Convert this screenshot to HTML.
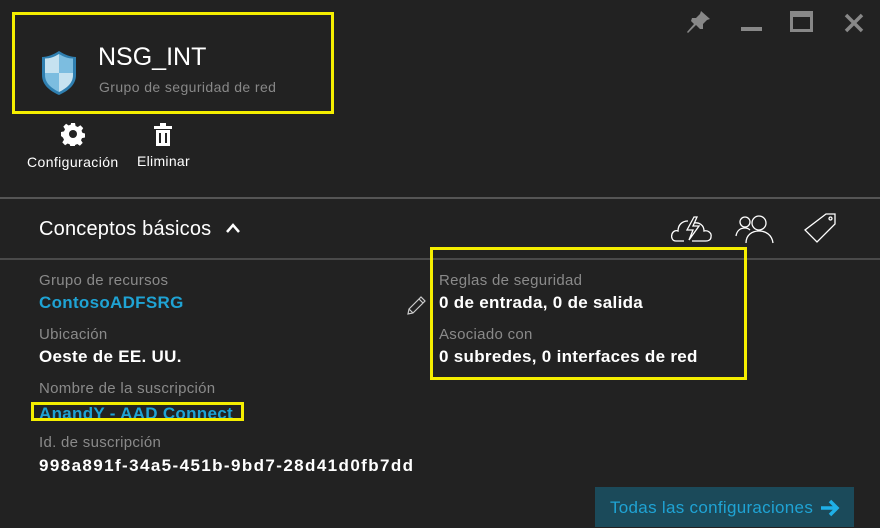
<!DOCTYPE html>
<html><head><meta charset="utf-8"><style>
*{margin:0;padding:0;box-sizing:border-box}
body{width:880px;height:528px;background:#222;font-family:"Liberation Sans",sans-serif;position:relative;overflow:hidden;color:#fff}
.a{position:absolute;white-space:nowrap}
.yb{position:absolute;border:3px solid #f5ee00}
.lbl{color:#8a8a8a;font-size:15px;letter-spacing:0.3px}
.val{color:#fff;font-size:17px;font-weight:bold;letter-spacing:0.3px}
.lnk{color:#1fa3d4;font-size:17px;font-weight:bold;letter-spacing:0.3px}
.ln{position:absolute;left:0;width:880px;height:2px;background:#555}
</style></head><body>
<div class="yb" style="left:12px;top:12px;width:322px;height:102px"></div>
<svg class="a" style="left:40px;top:49px" width="38" height="48" viewBox="0 0 38 48">
<path d="M19 2 C13 6 7 8 2 8 V26 C2 36 10 42 19 46 C28 42 36 36 36 26 V8 C31 8 25 6 19 2Z" fill="#2f7fb0"/>
<path d="M19 5 V24 H5 V9.5 C10 9.5 14 8 19 5Z" fill="#c6e2f0"/>
<path d="M19 5 C24 8 28 9.5 33 9.5 V24 H19Z" fill="#7cbde0"/>
<path d="M5 24 H19 V43 C11 39 5 34 5 26Z" fill="#7cbde0"/>
<path d="M19 24 H33 V26 C33 34 27 39 19 43Z" fill="#c6e2f0"/>
</svg>
<div class="a" style="left:98px;top:43px;font-size:25px;color:#fff">NSG_INT</div>
<div class="a" style="left:99px;top:79px;font-size:14px;color:#888;letter-spacing:0.4px">Grupo de seguridad de red</div>
<svg class="a" style="left:61px;top:122px" width="24" height="24" viewBox="0 0 24 24"><path fill="#fff" d="M10 1h4l.6 3 2.2 1 2.6-1.7 2.8 2.8L20.5 8.7l1 2.2 2.5.6v4l-3 .6-1 2.2 1.7 2.6-2.8 2.8-2.6-1.7-2.2 1-.6 2.5h-4l-.6-3-2.2-1-2.6 1.7-2.8-2.8 1.7-2.6-1-2.2L0 14v-4l3-.6 1-2.2L2.3 4.6l2.8-2.8 2.6 1.7 2.2-1z"/><circle cx="12" cy="12" r="4" fill="#222"/></svg>
<svg class="a" style="left:153px;top:123px" width="20" height="24" viewBox="0 0 20 24"><rect x="1" y="3" width="18" height="3" fill="#fff"/><rect x="7" y="0" width="6" height="3" fill="#fff"/><path d="M3 7h14v16H3z" fill="#fff"/><rect x="6" y="10" width="2" height="10" fill="#222"/><rect x="12" y="10" width="2" height="10" fill="#222"/></svg>
<div class="a" style="left:27px;top:154px;font-size:14px;letter-spacing:0.4px">Configuración</div>
<div class="a" style="left:137px;top:153px;font-size:14px;letter-spacing:0.3px">Eliminar</div>
<svg class="a" style="left:686px;top:11px" width="26" height="24" viewBox="0 0 26 24"><path d="M15 0 L24 8 L21 9 L17 13 L17 18 L14 18 L10 14 L2 22 L1 21 L8 13 L5 10 L6 7 L10 7 L14 3Z" fill="#888"/></svg>
<div class="a" style="left:741px;top:27px;width:21px;height:4px;background:#888"></div>
<div class="a" style="left:790px;top:11px;width:23px;height:21px;border:3px solid #888;border-top-width:6px"></div>
<svg class="a" style="left:844px;top:13px" width="20" height="20" viewBox="0 0 20 20"><path d="M2 2L18 18M18 2L2 18" stroke="#888" stroke-width="3.5"/></svg>
<div class="ln" style="top:197px"></div>
<div class="a" style="left:39px;top:218px;font-size:20px;color:#fff;letter-spacing:0.2px">Conceptos básicos</div>
<svg class="a" style="left:225px;top:222px" width="16" height="12" viewBox="0 0 16 12"><path d="M2 10L8 3L14 10" stroke="#fff" stroke-width="2.5" fill="none"/></svg>
<svg class="a" style="left:670px;top:213px" width="44" height="32" viewBox="0 0 44 32" fill="none" stroke="#fff" stroke-width="1.3"><path d="M14 28H6C2 28 1 24 2 21C3 18 6 17 8 18C8 12 12 8 18 8M24 10C29 9 34 12 34 18C38 17 42 20 41 24C41 27 38 28 36 28H22"/><path d="M24 4L17 17H23L19 27L29 13H23L27 4Z"/></svg>
<svg class="a" style="left:735px;top:214px" width="42" height="30" viewBox="0 0 42 30" fill="none" stroke="#fff" stroke-width="1.3"><circle cx="10" cy="8" r="5"/><path d="M1 22C2 16 6 14 10 14C12 14 14 15 15 16"/><circle cx="24" cy="9" r="7"/><path d="M11 29C11 21 17 17 24 17C31 17 37 21 38 29"/></svg>
<svg class="a" style="left:802px;top:212px" width="36" height="34" viewBox="0 0 36 34" fill="none" stroke="#fff" stroke-width="1.3"><path d="M24 2H33V12L15 30L3 18Z"/><circle cx="28.5" cy="6.5" r="1.5"/></svg>
<div class="ln" style="top:258px;background:#4a4a4a"></div>
<div class="a lbl" style="left:39px;top:272px">Grupo de recursos</div>
<div class="a lnk" style="left:39px;top:293px">ContosoADFSRG</div>
<svg class="a" style="left:405px;top:295px" width="22" height="22" viewBox="0 0 22 22" fill="none" stroke="#ccc" stroke-width="1.2"><path d="M3 19L4 14L16 2L20 6L8 18Z M14 4L18 8 M4 14L8 18"/></svg>
<div class="a lbl" style="left:39px;top:326px">Ubicación</div>
<div class="a val" style="left:39px;top:347px">Oeste de EE. UU.</div>
<div class="a lbl" style="left:39px;top:380px">Nombre de la suscripción</div>
<div class="a lnk" style="left:39px;top:402px;height:16px;overflow:hidden;line-height:24px">AnandY - AAD Connect</div>
<div class="yb" style="left:31px;top:402px;width:213px;height:19px"></div>
<div class="a lbl" style="left:39px;top:434px">Id. de suscripción</div>
<div class="a val" style="left:39px;top:456px;letter-spacing:1.4px">998a891f-34a5-451b-9bd7-28d41d0fb7dd</div>
<div class="yb" style="left:430px;top:247px;width:317px;height:133px"></div>
<div class="a lbl" style="left:439px;top:272px">Reglas de seguridad</div>
<div class="a val" style="left:439px;top:293px">0 de entrada, 0 de salida</div>
<div class="a lbl" style="left:439px;top:326px">Asociado con</div>
<div class="a val" style="left:439px;top:347px">0 subredes, 0 interfaces de red</div>
<div class="a" style="left:595px;top:487px;width:259px;height:40px;background:#1b4a5a"></div>
<div class="a" style="left:610px;top:498px;font-size:17px;color:#1fa3d4;letter-spacing:0.3px">Todas las configuraciones</div>
<svg class="a" style="left:819px;top:499px" width="22" height="18" viewBox="0 0 22 18"><path d="M2 9H18M11 2L18 9L11 16" stroke="#1fb0e8" stroke-width="3.5" fill="none"/></svg>
</body></html>
